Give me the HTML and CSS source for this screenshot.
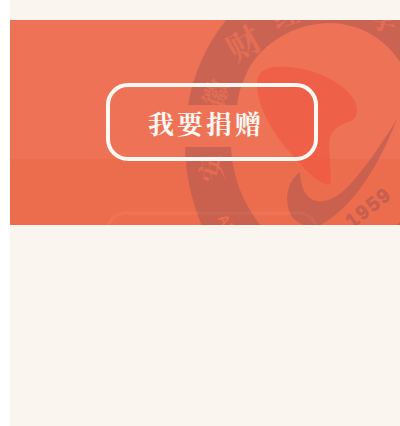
FILE: index.html
```
<!DOCTYPE html>
<html lang="zh-CN">
<head>
<meta charset="utf-8">
<meta name="viewport" content="width=device-width, initial-scale=1">
<title>我要捐赠</title>
<link rel="stylesheet" href="styles.css">
</head>
<body>
<main class="page">
  <section class="banner">
    <svg class="emblem" width="390" height="206" viewBox="10 20 390 206" aria-hidden="true">
      <!-- ring, open where the button label sits -->
      <g class="emblem-dark">
        <path d="M226 20H400V62Q391 49 382 42Q359 23 328 23Q300 24 277 39Q253 55 245 77Q239 90 237 105H188Q196 58 226 20Z"/>
        <path d="M185 147H231Q233 191 261 226H202Q186 188 185 147Z"/>
        <path d="M300 172C284 184 285 206 292 217Q297 223 307 226H319C345 212 373 181 397 119C374 156 353 185 337 196C317 208 301 200 300 172Z"/>
        <path d="M396 226L400 222V226Z"/>
      </g>
      <path class="emblem-red" d="M257 80C260 68 272 66 288 67C316 69 343 83 353 98C359 107 358 118 351 121C336 126 329 132 329 145L331 179Q331 187 325 184C310 178 301 164 287 149C270 129 256 103 257 80Z"/>
      <g class="emblem-script">
        <text transform="translate(211 168) rotate(-98)" y="10">安</text>
        <text transform="translate(216 93) rotate(-72)" y="10">徽</text>
        <text transform="translate(244 44) rotate(-30)" class="script-large" y="12">财</text>
        <text transform="translate(286 15) rotate(-16)" y="10">经</text>
        <text transform="translate(384 20) rotate(18)" y="10">学</text>
      </g>
      <text class="emblem-latin" transform="translate(217 218) rotate(58)">AN</text>
      <text class="emblem-year" transform="translate(352 229) rotate(-38)">1959</text>
      <path class="echo" d="M108 226Q113 213 126 213H298Q311 213 316 226"/>
    </svg>
    <button class="donate" type="button">我要捐赠</button>
  </section>
</main>
</body>
</html>
```
FILE: styles.css
```
* {
  box-sizing: border-box;
}

body {
  margin: 0;
  background: #fff;
  font-family: "Noto Serif CJK SC", "Noto Sans CJK SC", serif;
}

.page {
  min-height: 100vh;
  margin-left: 10px;
  padding-top: 20px;
  background: #faf5ee;
}

.banner {
  position: relative;
  overflow: hidden;
  padding: 63px 16px 64px 96px;
  background: linear-gradient(#ee7356 139px, #ec6d4e 139px);
}

.emblem {
  position: absolute;
  top: 0;
  left: 0;
}

.emblem-dark {
  fill: #a5524f;
  fill-opacity: 0.48;
}

.emblem-red {
  fill: #ef4f3c;
  fill-opacity: 0.52;
}

.emblem-script {
  fill: #ee7356;
  fill-opacity: 0.7;
  font-size: 27px;
  font-weight: 700;
  text-anchor: middle;
}

.script-large {
  font-size: 34px;
}

.emblem-latin {
  fill: #ec6d4e;
  font: bold 15px "Liberation Sans", sans-serif;
}

.emblem-year {
  fill: #a5524f;
  fill-opacity: 0.48;
  stroke: #a5524f;
  stroke-opacity: 0.3;
  font: bold 20px "Liberation Sans", sans-serif;
  letter-spacing: 2px;
}

.echo {
  fill: none;
  stroke: #fff;
  stroke-opacity: 0.05;
  stroke-width: 3px;
}

.donate {
  position: relative;
  display: block;
  padding: 18px 50px 16px 38px;
  border: 4px solid #fff8f3;
  border-radius: 22px;
  background: transparent;
  color: #fff8f3;
  font-family: inherit;
  font-size: 26px;
  font-weight: 700;
  line-height: 36px;
  letter-spacing: 3px;
  white-space: nowrap;
  cursor: pointer;
}
```
